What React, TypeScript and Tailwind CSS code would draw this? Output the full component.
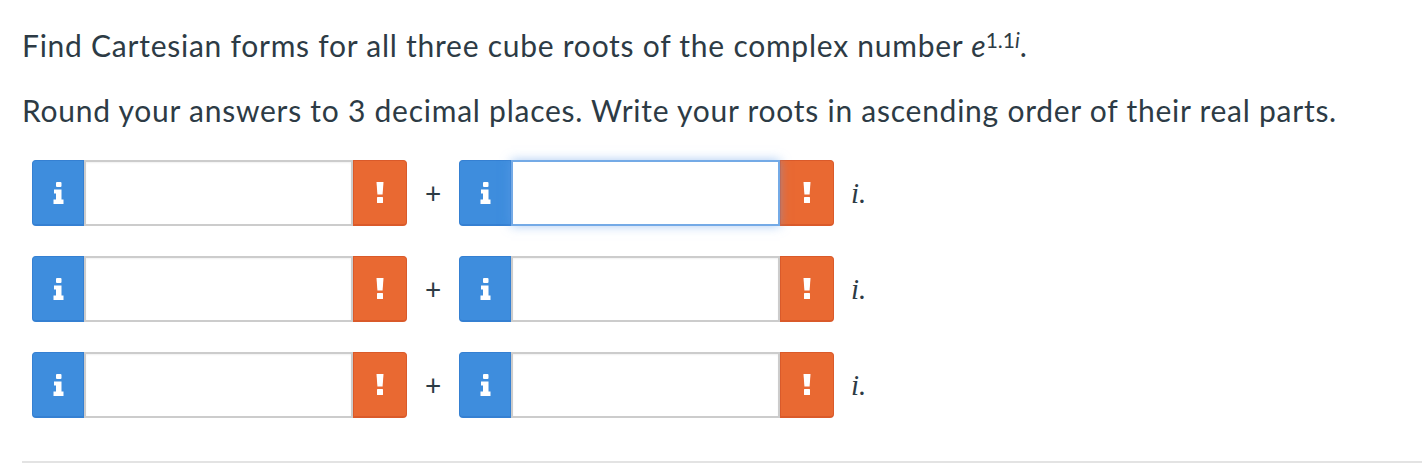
import React from 'react';

const InfoGlyph = () => (
  <svg width="11" height="22" viewBox="0 0 11 22" fill="white">
    <rect x="3" y="0" width="5.5" height="5" rx="1" />
    <path d="M1 7.5 H8.5 V17.5 H10.5 V22 H0.5 V17.5 H3 V11.5 H1 Z" />
  </svg>
);

const BangGlyph = () => (
  <svg width="8" height="21" viewBox="0 0 8 21" fill="white">
    <path d="M0.5 0 H7.5 L6.6 12.5 H1.4 Z" />
    <rect x="1" y="15" width="6" height="6" rx="0.5" />
  </svg>
);

function AnswerBox({ focused = false }: { focused?: boolean }) {
  return (
    <div className="flex h-[66px]">
      <div className="flex w-[52px] items-center justify-center rounded-l-[4px] border border-b-2 border-[#3580d2] bg-[#3e8ddd]">
        <InfoGlyph />
      </div>
      <input
        type="text"
        className={
          focused
            ? 'relative z-10 w-[269px] border-2 border-[#74aae6] bg-white outline-none shadow-[0_0_10px_rgba(102,160,233,0.55)]'
            : 'w-[269px] border-2 border-[#cccccc] bg-white outline-none shadow-[inset_0_1px_2px_rgba(0,0,0,0.06)]'
        }
      />
      <div className="flex w-[54px] items-center justify-center rounded-r-[4px] border border-b-2 border-[#da5a2a] bg-[#e96932]">
        <BangGlyph />
      </div>
    </div>
  );
}

function RootRow({ focused = false }: { focused?: boolean }) {
  return (
    <div className="flex items-center">
      <AnswerBox />
      <span className="w-[52px] text-center text-[28px] leading-none text-[#2d3b45]">+</span>
      <AnswerBox focused={focused} />
      <span
        className="ml-[17px] text-[29px] italic leading-none text-[#2d3b45]"
        style={{ fontFamily: '"Liberation Serif", "Times New Roman", serif' }}
      >
        i.
      </span>
    </div>
  );
}

export default function App() {
  return (
    <div
      className="min-h-[466px] bg-white pl-[22px] text-[#2d3b45]"
      style={{ fontFamily: 'Lato, "Open Sans", sans-serif' }}
    >
      <p className="pt-[25px] text-[30px] leading-[40px] tracking-[0.75px]">
        Find Cartesian forms for all three cube roots of the complex number{' '}
        <i className="tracking-normal">e</i>
        <sup className="relative top-[4px] align-top text-[21px] leading-none tracking-normal">
          1.1<i>i</i>
        </sup>
        .
      </p>
      <p className="mt-[25px] text-[30px] leading-[40px] tracking-[0.75px]">
        Round your answers to 3 decimal places. Write your roots in ascending order of their real parts.
      </p>

      <div className="ml-[10px] mt-[30px] flex flex-col gap-[30px]">
        <RootRow focused />
        <RootRow />
        <RootRow />
      </div>

      <div className="mt-[43px] h-[2px] bg-[#e3e3e3]" />
    </div>
  );
}
